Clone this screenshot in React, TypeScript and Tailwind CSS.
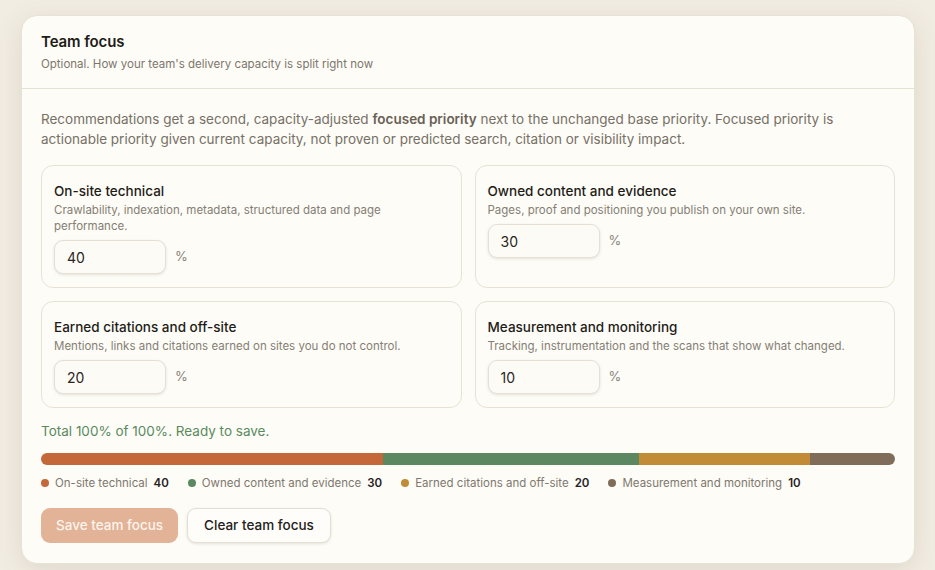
import React from "react";

const cats = [
  { title: "On-site technical", desc: "Crawlability, indexation, metadata, structured data and page performance.", value: 40, color: "#c4683a", legend: "On-site technical" },
  { title: "Owned content and evidence", desc: "Pages, proof and positioning you publish on your own site.", value: 30, color: "#5b8860", legend: "Owned content and evidence" },
  { title: "Earned citations and off-site", desc: "Mentions, links and citations earned on sites you do not control.", value: 20, color: "#c28c37", legend: "Earned citations and off-site" },
  { title: "Measurement and monitoring", desc: "Tracking, instrumentation and the scans that show what changed.", value: 10, color: "#7f6d5a", legend: "Measurement and monitoring" },
];

export default function App() {
  return (
    <div
      className="min-h-[570px] w-full bg-[#f2ede3] pt-[15px] pl-[21px] pr-[20px] pb-[7px]"
      style={{ fontFamily: "Inter, 'Noto Sans', sans-serif" }}
    >
      <div className="rounded-[16px] border border-[#e7e2d6] bg-[#fdfcf7] shadow-[0_6px_28px_rgba(90,70,40,0.13)]">
        <div className="px-[19px] pt-[15px] pb-[16px] border-b border-[#e7e2d6]">
          <div className="text-[15px] leading-[22px] font-semibold text-[#1f1c17] tracking-[-0.1px]">Team focus</div>
          <div className="mt-[3px] text-[11.5px] leading-[16px] text-[#7d766c]">Optional. How your team's delivery capacity is split right now</div>
        </div>
        <div className="px-[19px] pt-[20px] pb-[20px]">
          <p className="text-[13.5px] leading-[20px] text-[#777066]">
            Recommendations get a second, capacity-adjusted <span className="font-semibold text-[#6a6155]">focused priority</span> next to the unchanged base priority. Focused priority is actionable priority given current capacity, not proven or predicted search, citation or visibility impact.
          </p>
          <div className="mt-[16px] grid grid-cols-2 gap-[13px]">
            {cats.map((c) => (
              <div key={c.title} className="rounded-[12px] border border-[#e7e2d4] bg-[#fdfcf7] px-[12px] pt-[15px] pb-[13px]">
                <div className="text-[13.5px] leading-[20px] font-medium text-[#1f1c17]">{c.title}</div>
                <div className="mt-[1px] text-[11.5px] leading-[16px] text-[#857e74] pr-[20px]">{c.desc}</div>
                <div className="mt-[6px] flex items-center gap-[9px]">
                  <div className="h-[34px] w-[112px] rounded-[9px] border border-[#e5e0d3] bg-[#fdfbf6] shadow-[0_1px_3px_rgba(60,45,20,0.12)] flex items-center px-[12px] text-[14px] text-[#2a2621]">
                    {c.value}
                  </div>
                  <span className="text-[13px] text-[#8a8379]">%</span>
                </div>
              </div>
            ))}
          </div>
          <div className="mt-[13px] text-[13.5px] leading-[20px] text-[#5a8a5e]">Total 100% of 100%. Ready to save.</div>
          <div className="mt-[12px] flex h-[12px] w-full overflow-hidden rounded-full">
            {cats.map((c) => (
              <div key={c.title} style={{ width: `${c.value}%`, backgroundColor: c.color }} />
            ))}
          </div>
          <div className="mt-[10px] flex items-center gap-[19px] text-[11.5px] leading-[16px]">
            {cats.map((c) => (
              <div key={c.title} className="flex items-center">
                <span className="mr-[6px] h-[8px] w-[8px] rounded-full" style={{ backgroundColor: c.color }} />
                <span className="text-[#7f786e]">{c.legend}</span>
                <span className="ml-[6px] font-semibold text-[#26221d]">{c.value}</span>
              </div>
            ))}
          </div>
          <div className="mt-[17px] flex items-center gap-[9px]">
            <button className="h-[35px] rounded-[9px] bg-[#e2b397] px-[15px] text-[13.5px] font-medium text-[#fdf4ed]">Save team focus</button>
            <button className="h-[35px] rounded-[9px] border border-[#e3dfd3] bg-[#fefdf9] px-[16px] text-[13.5px] font-medium text-[#24201b] shadow-[0_1px_3px_rgba(60,45,20,0.12)]">Clear team focus</button>
          </div>
        </div>
      </div>
    </div>
  );
}
